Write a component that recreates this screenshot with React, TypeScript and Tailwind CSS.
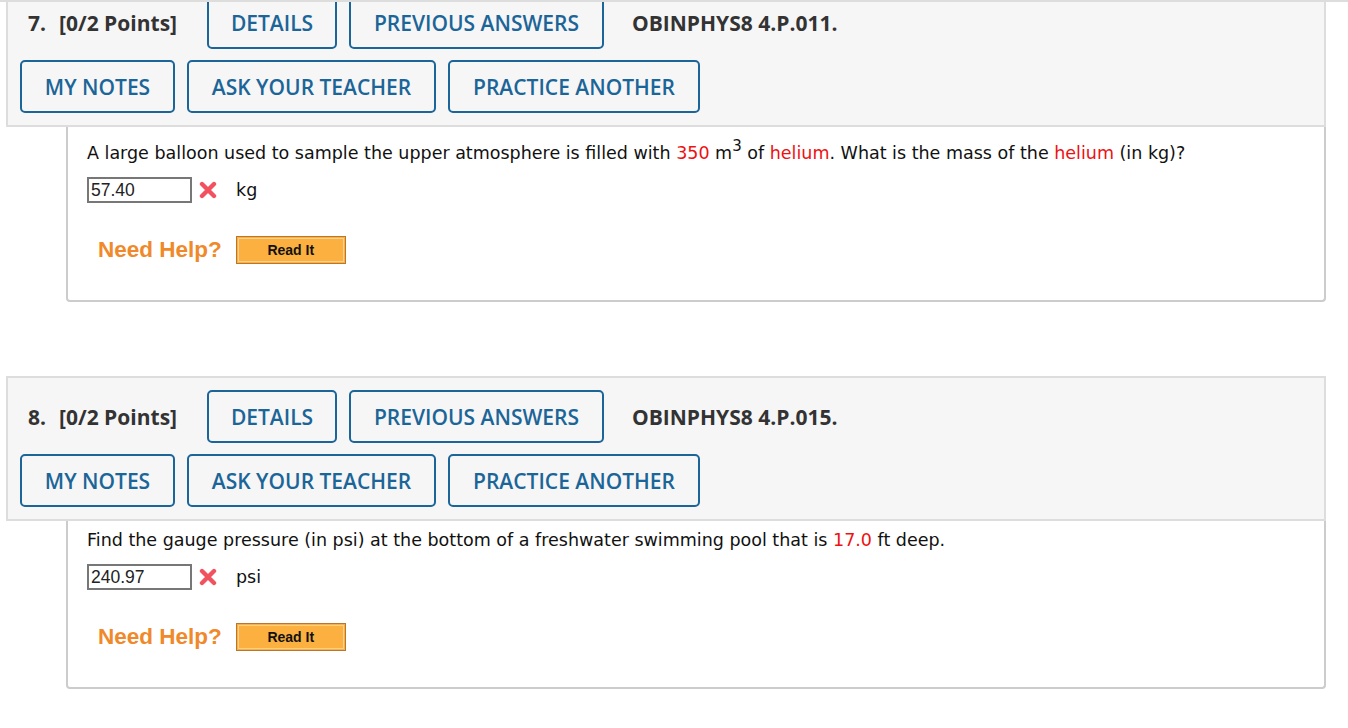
import React from 'react';

const headerFont = { fontFamily: '"Open Sans", "Liberation Sans", sans-serif' };

function OutlineButton({ label, width }: { label: string; width: string }) {
  return (
    <button
      className={`${width} h-[53px] shrink-0 rounded-[5px] border-2 border-[#1b6598] bg-[#f6f6f6] text-[21px] leading-[28px] font-semibold text-[#1b6598] flex items-center justify-center`}
      style={headerFont}
    >
      {label}
    </button>
  );
}

function WrongMark() {
  return (
    <svg width="18" height="18" viewBox="0 0 18 18" className="shrink-0">
      <path d="M3 3 L15 15 M15 3 L3 15" stroke="#f2525f" strokeWidth="4.4" strokeLinecap="round" />
    </svg>
  );
}

function Question({
  num,
  code,
  topPad,
  children,
  answer,
  unit,
}: {
  num: string;
  code: string;
  topPad: string;
  children: React.ReactNode;
  answer: string;
  unit: string;
}) {
  return (
    <div>
      {/* header */}
      <div className="ml-[6px] mr-[22px] border-2 border-[#dddddd] bg-[#f6f6f6] pt-[12px] pb-[12px] pl-[12px]" style={headerFont}>
        <div className="flex items-center h-[53px]">
          <div className="ml-[8px] w-[179px] shrink-0 text-[21px] leading-[28px] font-bold text-[#333333] flex">
            <span>{num}.</span>
            <span className="ml-[13px]">[0/2 Points]</span>
          </div>
          <OutlineButton label="DETAILS" width="w-[130px]" />
          <div className="w-[12px]" />
          <OutlineButton label="PREVIOUS ANSWERS" width="w-[255px]" />
          <span className="ml-[28px] text-[21px] leading-[28px] font-bold text-[#333333]">{code}</span>
        </div>
        <div className="mt-[11px] flex items-center gap-[12px] h-[53px]">
          <OutlineButton label="MY NOTES" width="w-[155px]" />
          <OutlineButton label="ASK YOUR TEACHER" width="w-[249px]" />
          <OutlineButton label="PRACTICE ANOTHER" width="w-[252px]" />
        </div>
      </div>

      {/* body */}
      <div
        className={`ml-[66px] mr-[22px] border-2 border-t-0 border-[#cccccc] rounded-b-[4px] bg-white pl-[19px] ${topPad} pb-[36px]`}
        style={{ fontFamily: '"DejaVu Sans", Verdana, sans-serif' }}
      >
        <div className="text-[17.5px] leading-[24px] text-[#111111]">{children}</div>
        <div className="mt-[12px] flex items-center h-[26px]">
          <div
            className="w-[105px] h-[26px] border-2 border-[#777777] bg-white pl-[2px] flex items-center text-[17.5px] text-[#222222]"
            style={{ fontFamily: '"Liberation Sans", Arial, sans-serif' }}
          >
            {answer}
          </div>
          <div className="ml-[7px] flex">
            <WrongMark />
          </div>
          <span className="ml-[19px] text-[17.5px] leading-[24px] text-[#111111]">{unit}</span>
        </div>
        <div className="mt-[33px] ml-[11px] flex items-center h-[28px]" style={{ fontFamily: '"Liberation Sans", Arial, sans-serif' }}>
          <span className="text-[22.5px] leading-[28px] font-bold text-[#f0892a]">Need Help?</span>
          <button className="ml-[14px] w-[110px] h-[28px] border border-[#b9762f] bg-[#fbb040] p-[1px]">
            <div className="w-full h-full border border-[#fdd08c] flex items-center justify-center text-[14px] leading-[20px] font-bold text-[#111111]">
              Read It
            </div>
          </button>
        </div>
      </div>
    </div>
  );
}

export default function App() {
  const red = 'text-[#ee1111]';
  return (
    <div className="w-[1348px] h-[728px] bg-white flex flex-col overflow-hidden">
      <div className="h-[2px] shrink-0 bg-[#dddddd] relative z-10" />
      <div className="-mt-[20px]">
        <Question num="7" code="OBINPHYS8 4.P.011." topPad="pt-[14px]" answer="57.40" unit="kg">
          A large balloon used to sample the upper atmosphere is filled with <span className={red}>350</span> m
          <sup className="text-[15px] leading-none relative -top-[8px]">3</sup> of <span className={red}>helium</span>. What is
          the mass of the <span className={red}>helium</span> (in kg)?
        </Question>
        <div className="h-[74px]" />
        <Question num="8" code="OBINPHYS8 4.P.015." topPad="pt-[7px]" answer="240.97" unit="psi">
          Find the gauge pressure (in psi) at the bottom of a freshwater swimming pool that is{' '}
          <span className={red}>17.0</span> ft deep.
        </Question>
      </div>
    </div>
  );
}
